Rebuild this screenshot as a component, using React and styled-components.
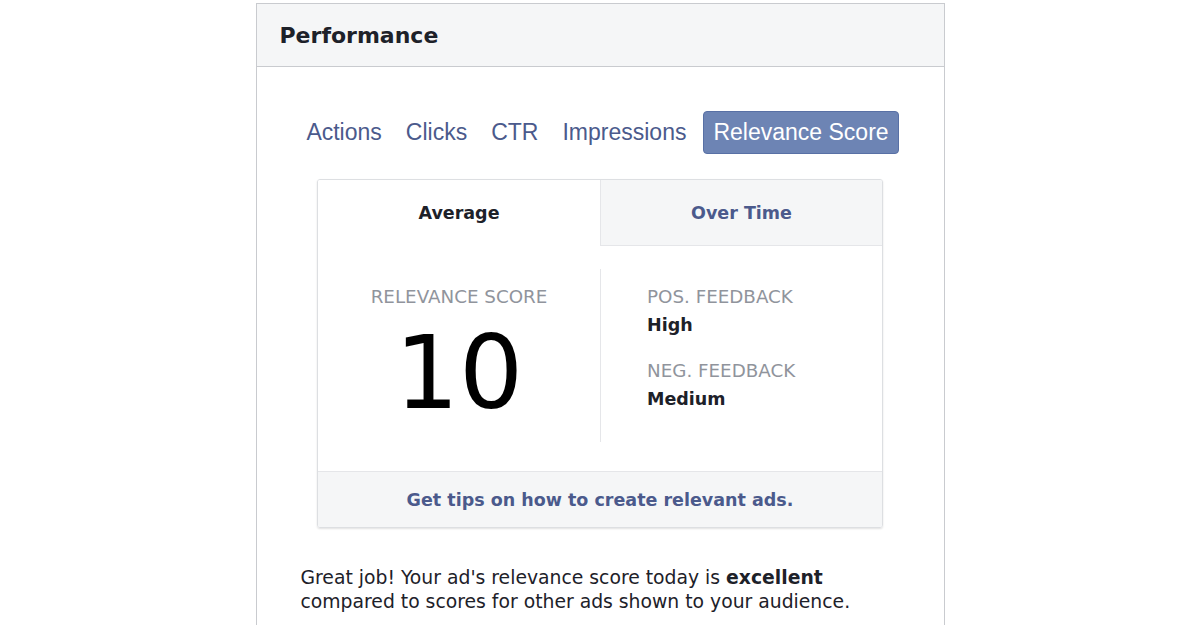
import styled, { createGlobalStyle } from "styled-components";

const GlobalStyle = createGlobalStyle`
    body {
        margin: 0;
        background: #fff;
        font-family: "DejaVu Sans", "Noto Sans", sans-serif;
        color: #1d2129;
    }
`

const StyledPanel = styled.div`
    width: 687px;
    margin: 3px auto 0;
    border: 1px solid #c9cbcf;
    background: #fff;
    padding-bottom: 60px;
`
const StyledHeader = styled.div`
    background: #f5f6f7;
    border-bottom: 1px solid #c9cbcf;
    height: 62px;
    display: flex;
        align-items: center;
    padding: 0 23px;
    font-size: 22px;
    font-weight: bold;
    color: #1d2129;
`
const StyledTabBar = styled.div`
    display: flex;
        align-items: center;
        justify-content: center;
    gap: 16px;
    margin-top: 44px;
    padding-left: 1px;
    font-family: "Liberation Sans", Arial, sans-serif;
    font-size: 23px;
`
const StyledTabLink = styled.a`
    color: #4b5a8c;
    padding: 0 4px;
    line-height: 43px;
    cursor: pointer;
`
const StyledActiveTab = styled.a`
    color: #fff;
    background: #6d84b4;
    border: 1px solid #5870a5;
    border-radius: 4px;
    height: 41px;
    line-height: 41px;
    padding: 0 9px;
    margin-left: -3px;
`
const StyledCard = styled.div`
    width: 564px;
    margin: 25px auto 0;
    border: 1px solid #dddfe2;
    border-radius: 3px;
    box-shadow: 0 1px 2px rgba(0, 0, 0, .12);
    overflow: hidden;
`
const StyledCardTabs = styled.div`
    display: flex;
`
const StyledCardTab = styled.div`
    flex: 0 0 50%;
    box-sizing: border-box;
    height: 66px;
    display: flex;
        align-items: center;
        justify-content: center;
    font-size: 17.5px;
    font-weight: bold;
    color: ${props => props.active ? '#1d2129' : '#4b5a8c'};
    background: ${props => props.active ? '#fff' : '#f5f6f7'};
    border-bottom: ${props => props.active ? 'none' : '1px solid #e5e6e9'};
    border-left: ${props => props.active ? 'none' : '1px solid #e5e6e9'};
`
const StyledCardBody = styled.div`
    display: flex;
    padding: 23px 0 29px;
`
const StyledScoreColumn = styled.div`
    flex: 0 0 50%;
    height: 173px;
    padding-top: 16px;
    text-align: center;
    box-sizing: border-box;
`
const StyledFeedbackColumn = styled.div`
    flex: 0 0 50%;
    height: 173px;
    padding: 16px 0 0 46px;
    border-left: 1px solid #e5e6e9;
    box-sizing: border-box;
`
const StyledLabel = styled.div`
    font-size: 18.3px;
    line-height: 24px;
    color: #90949c;
    margin-top: ${props => props.gap || 0}px;
`
const StyledValue = styled.div`
    font-size: 17.5px;
    line-height: 24px;
    font-weight: bold;
    color: #1d2129;
    margin-top: 4px;
`
const StyledScore = styled.div`
    font-size: 101px;
    line-height: 101px;
    margin-top: 14px;
    color: #000;
`
const StyledFooter = styled.div`
    height: 55px;
    border-top: 1px solid #e5e6e9;
    background: #f5f6f7;
    display: flex;
        align-items: center;
        justify-content: center;
    font-size: 17.5px;
    font-weight: bold;
    color: #4b5a8c;
`
const StyledMessage = styled.p`
    margin: 38px 0 0;
    padding: 0 30px 0 44px;
    font-size: 18.8px;
    line-height: 24px;
    color: #1d2129;
    white-space: nowrap;
`

const tabs = ['Actions', 'Clicks', 'CTR', 'Impressions'];

function App() {
    return(
        <StyledPanel>
            <GlobalStyle />
            <StyledHeader>Performance</StyledHeader>
            <StyledTabBar>
                {tabs.map((name) => (
                    <StyledTabLink key={name}>{name}</StyledTabLink>
                ))}
                <StyledActiveTab>Relevance Score</StyledActiveTab>
            </StyledTabBar>
            <StyledCard>
                <StyledCardTabs>
                    <StyledCardTab active>Average</StyledCardTab>
                    <StyledCardTab>Over Time</StyledCardTab>
                </StyledCardTabs>
                <StyledCardBody>
                    <StyledScoreColumn>
                        <StyledLabel>RELEVANCE SCORE</StyledLabel>
                        <StyledScore>10</StyledScore>
                    </StyledScoreColumn>
                    <StyledFeedbackColumn>
                        <StyledLabel>POS. FEEDBACK</StyledLabel>
                        <StyledValue>High</StyledValue>
                        <StyledLabel gap={22}>NEG. FEEDBACK</StyledLabel>
                        <StyledValue>Medium</StyledValue>
                    </StyledFeedbackColumn>
                </StyledCardBody>
                <StyledFooter>Get tips on how to create relevant ads.</StyledFooter>
            </StyledCard>
            <StyledMessage>
                Great job! Your ad's relevance score today is <b>excellent</b><br />
                compared to scores for other ads shown to your audience.
            </StyledMessage>
        </StyledPanel>
    )
}

export default App;
